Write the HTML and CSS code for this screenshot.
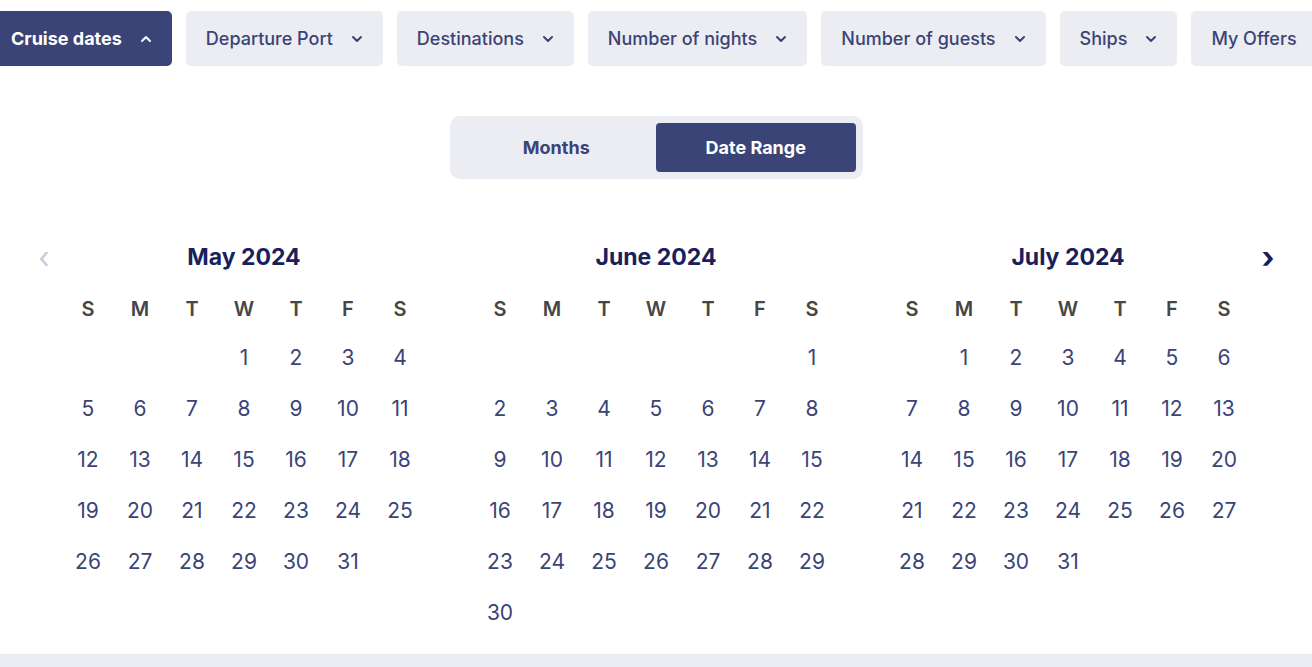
FILE: index.html
```html
<!DOCTYPE html>
<html lang="en">
<head>
    <meta charset="UTF-8">
    <meta name="viewport" content="width=device-width, initial-scale=1.0">
    <title>Cruise dates</title>
    <link rel="stylesheet" href="styles.css">
</head>
<body>
    <div class="filters">
        <button class="filter active">Cruise dates
            <svg class="chev" viewBox="0 0 12 8"><polyline points="2,6 6,2 10,6"/></svg>
        </button>
        <button class="filter">Departure Port
            <svg class="chev" viewBox="0 0 12 8"><polyline points="2,2 6,6 10,2"/></svg>
        </button>
        <button class="filter">Destinations
            <svg class="chev" viewBox="0 0 12 8"><polyline points="2,2 6,6 10,2"/></svg>
        </button>
        <button class="filter">Number of nights
            <svg class="chev" viewBox="0 0 12 8"><polyline points="2,2 6,6 10,2"/></svg>
        </button>
        <button class="filter">Number of guests
            <svg class="chev" viewBox="0 0 12 8"><polyline points="2,2 6,6 10,2"/></svg>
        </button>
        <button class="filter">Ships
            <svg class="chev" viewBox="0 0 12 8"><polyline points="2,2 6,6 10,2"/></svg>
        </button>
        <button class="filter">My Offers</button>
    </div>

    <div class="switch">
        <button class="switch-option">Months</button>
        <button class="switch-option active">Date Range</button>
    </div>

    <div class="calendar">
        <button class="nav prev">&#8249;</button>
        <div class="months" id="months"></div>
        <button class="nav next">&#8250;</button>
    </div>

    <div class="footer"></div>

    <script>
        const monthNames = ["January", "February", "March", "April", "May", "June",
            "July", "August", "September", "October", "November", "December"];
        const weekdays = ['S', 'M', 'T', 'W', 'T', 'F', 'S'];

        function buildMonth(year, month) {
            let html = `<div class="month"><h3 class="month-title">${monthNames[month]} ${year}</h3>`;
            html += '<div class="weekdays">';
            weekdays.forEach(d => { html += `<span>${d}</span>`; });
            html += '</div><div class="days">';
            const first = new Date(year, month, 1).getDay();
            const total = new Date(year, month + 1, 0).getDate();
            for (let i = 0; i < first; i++) html += '<span></span>';
            for (let d = 1; d <= total; d++) html += `<span>${d}</span>`;
            html += '</div></div>';
            return html;
        }

        document.getElementById('months').innerHTML =
            buildMonth(2024, 4) + buildMonth(2024, 5) + buildMonth(2024, 6);
    </script>
</body>
</html>
```

FILE: styles.css
```css
body {
    margin: 0;
    font-family: 'Inter', 'Liberation Sans', sans-serif;
    background: #ffffff;
    color: #3a4476;
    overflow: hidden;
}
button {
    font-family: inherit;
    border: none;
    cursor: pointer;
}
.filters {
    display: flex;
    gap: 14px;
    padding-top: 11px;
    margin-left: -9px;
    white-space: nowrap;
}
.filter {
    flex: none;
    display: flex;
    align-items: center;
    gap: 18px;
    height: 55px;
    padding: 0 20px;
    background: #ecedf3;
    color: #3a4476;
    border-radius: 5px;
    font-size: 18px;
    font-weight: 500;
}
.filter.active {
    background: #3a4476;
    color: #ffffff;
    font-weight: 700;
}
.chev {
    width: 12px;
    height: 8px;
    fill: none;
    stroke: currentColor;
    stroke-width: 2;
    stroke-linecap: round;
    stroke-linejoin: round;
}
.switch {
    display: grid;
    grid-template-columns: 1fr 1fr;
    width: 399px;
    height: 49px;
    margin: 50px auto 0;
    padding: 7px;
    background: #ecedf3;
    border-radius: 10px;
}
.switch-option {
    background: transparent;
    color: #3a4476;
    font-size: 18px;
    font-weight: 700;
    border-radius: 4px;
}
.switch-option.active {
    background: #3a4476;
    color: #ffffff;
}
.calendar {
    display: flex;
    justify-content: center;
    align-items: flex-start;
    margin-top: 63px;
}
.nav {
    width: 20px;
    height: 30px;
    padding: 0;
    background: none;
    font-size: 30px;
    line-height: 28px;
    font-weight: 700;
    color: #14205a;
}
.nav.prev {
    color: #c8cbd9;
    font-weight: 400;
}
.months {
    display: flex;
    gap: 48px;
    margin: 0 8px;
}
.month {
    width: 364px;
}
.month-title {
    margin: 0 0 14px;
    height: 30px;
    line-height: 30px;
    text-align: center;
    font-size: 23px;
    font-weight: 700;
    color: #17215c;
}
.weekdays, .days {
    display: grid;
    grid-template-columns: repeat(7, 52px);
    text-align: center;
}
.weekdays span {
    line-height: 46px;
    font-size: 20px;
    font-weight: 600;
    color: #464646;
}
.days span {
    line-height: 51px;
    font-size: 21px;
    color: #3a4476;
}
.footer {
    margin-top: 16px;
    height: 40px;
    background: #ecedf3;
}
```
